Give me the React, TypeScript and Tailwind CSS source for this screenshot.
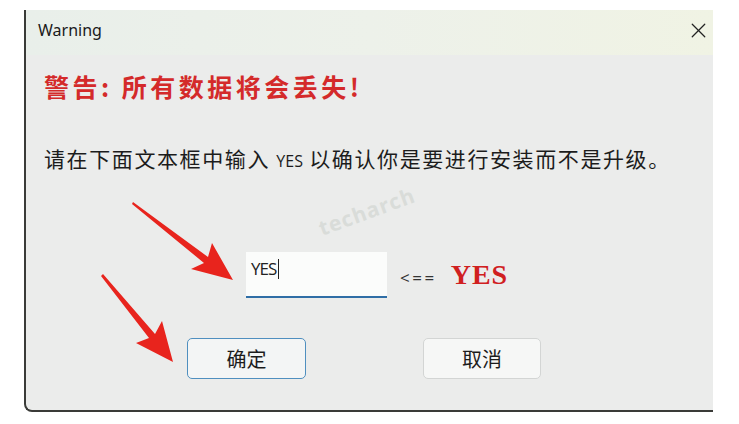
import React from "react";
import { X } from "lucide-react";

const cjk = '"Noto Sans CJK SC", "Noto Sans", sans-serif';

const Arrows: React.FC = () => (
  <svg className="absolute inset-0 pointer-events-none" width={739} height={424} viewBox="0 0 739 424">
    <text
      x={322}
      y={236}
      transform="rotate(-20 322 236)"
      fontFamily='"Open Sans", sans-serif'
      fontWeight={700}
      fontSize={21}
      fill="#d9dcd9"
      letterSpacing={1}
    >
      techarch
    </text>
    <polygon points="133,202 208,257 212,243 233,280 191,269 204,263 132,204" fill="#e8241d" />
    <polygon points="103,274 155,334 162,321 173,362 136,343 149,338 101,276" fill="#e8241d" />
  </svg>
);

export default function App() {
  return (
    <div className="relative w-[739px] h-[424px] bg-white overflow-hidden">
      <div className="ml-[24px] mt-[10px] w-[689px] h-[402px] flex flex-col border-l-2 border-b-2 border-[#3a3b38] rounded-bl-[8px] bg-[#ebeceb] overflow-hidden">
        <div className="h-[45px] flex items-center justify-between pl-[12px] pr-[2px] pb-[5px] bg-gradient-to-r from-[#e9efea] via-[#edf1ea] to-[#f0f3e4]">
          <span className="text-[16px] text-[#1a1a1a]" style={{ fontFamily: '"Noto Sans", sans-serif' }}>
            Warning
          </span>
          <X size={25} strokeWidth={1.2} className="text-[#222]" />
        </div>
        <div className="flex flex-col pl-[18px]">
          <div
            className="mt-[16px] h-[30px] leading-[30px] text-[25px] font-bold text-[#d42a2a] tracking-[3.5px] whitespace-nowrap"
            style={{ fontFamily: cjk }}
          >
            警告: 所有数据将会丢失!
          </div>
          <div
            className="mt-[42px] h-[30px] leading-[30px] text-[21px] text-[#1c1c1c] tracking-[1.6px] whitespace-nowrap"
            style={{ fontFamily: cjk }}
          >
            请在下面文本框中输入 <span className="text-[16px] tracking-[0px]" style={{ fontFamily: '"Open Sans", sans-serif' }}>YES</span> 以确认你是要进行安装而不是升级。
          </div>
          <div className="mt-[79px] flex items-center">
            <div className="ml-[202px] w-[141px] h-[46px] bg-[#fbfcfb] border-b-2 border-[#2f6ea6] flex items-start pt-[6px] pl-[5px]">
              <span className="text-[17px] leading-[22px] text-[#222] tracking-[-1px]" style={{ fontFamily: '"Open Sans", sans-serif' }}>
                YES
              </span>
              <span className="ml-[2px] mt-[1px] w-px h-[20px] bg-[#222]" />
            </div>
            <span className="ml-[13px] mt-[6px] text-[17px] text-[#333] tracking-[2.5px]" style={{ fontFamily: '"Open Sans", sans-serif' }}>
              {"<=="}
            </span>
            <span
              className="ml-[14px] text-[28px] font-bold text-[#d0201f] tracking-[1px]"
              style={{ fontFamily: '"Liberation Serif", serif' }}
            >
              YES
            </span>
          </div>
          <div className="mt-[40px] flex">
            <button
              className="ml-[143px] w-[119px] h-[41px] rounded-[5px] border border-[#4f8fbf] bg-[#f3f5f5] text-[20px] text-[#1c1c1c]"
              style={{ fontFamily: cjk }}
            >
              确定
            </button>
            <button
              className="ml-[117px] w-[118px] h-[41px] rounded-[5px] border border-[#d3d5d4] bg-[#f6f7f6] text-[20px] text-[#1c1c1c]"
              style={{ fontFamily: cjk }}
            >
              取消
            </button>
          </div>
        </div>
      </div>
      <Arrows />
    </div>
  );
}
